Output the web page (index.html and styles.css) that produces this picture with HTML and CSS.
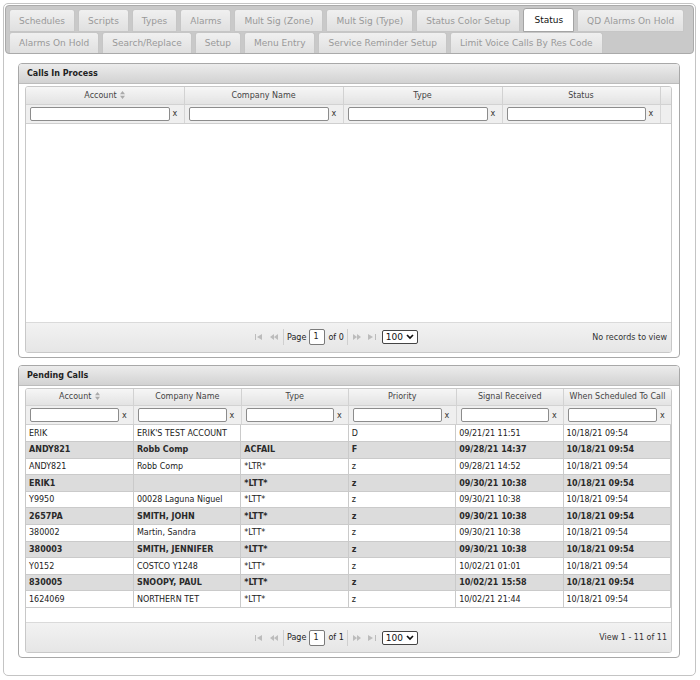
FILE: index.html
```html
<!DOCTYPE html>
<html lang="en">
<head>
    <meta charset="UTF-8">
    <title>Status</title>
    <link rel="stylesheet" href="styles.css">
</head>
<body>
    <div class="page">
        <div class="tabs">
            <ul class="tab-row">
                <li>Schedules</li>
                <li>Scripts</li>
                <li>Types</li>
                <li>Alarms</li>
                <li>Mult Sig (Zone)</li>
                <li>Mult Sig (Type)</li>
                <li>Status Color Setup</li>
                <li class="active">Status</li>
                <li>QD Alarms On Hold</li>
            </ul>
            <ul class="tab-row">
                <li>Alarms On Hold</li>
                <li>Search/Replace</li>
                <li>Setup</li>
                <li>Menu Entry</li>
                <li>Service Reminder Setup</li>
                <li>Limit Voice Calls By Res Code</li>
            </ul>
        </div>

        <section class="panel">
            <div class="panel-title">Calls In Process</div>
            <div class="panel-body">
                <div class="grid">
                    <table class="grid-head">
                        <colgroup>
                            <col style="width: 158px">
                            <col style="width: 159px">
                            <col style="width: 159px">
                            <col style="width: 158px">
                            <col>
                        </colgroup>
                        <tr class="labels">
                            <th>Account <svg class="sort" width="5" height="8" viewBox="0 0 5 8"><path d="M0 3.2L2.5 0 5 3.2zM0 4.8L2.5 8 5 4.8z"/></svg></th>
                            <th>Company Name</th>
                            <th>Type</th>
                            <th>Status</th>
                            <th class="scroll"></th>
                        </tr>
                        <tr class="filters">
                            <td><div class="filter"><input type="text"><span>x</span></div></td>
                            <td><div class="filter"><input type="text"><span>x</span></div></td>
                            <td><div class="filter"><input type="text"><span>x</span></div></td>
                            <td><div class="filter"><input type="text"><span>x</span></div></td>
                            <td class="scroll"></td>
                        </tr>
                    </table>
                    <div class="grid-body calls"></div>
                    <div class="pager">
                        <div></div>
                        <div class="pager-nav">
                            <svg class="pg-icon" width="8" height="6" viewBox="0 0 8 6"><path d="M0 0h1v6H0zM7 0v6L2 3z"/></svg>
                            <svg class="pg-icon" width="8" height="6" viewBox="0 0 8 6"><path d="M4 0v6L0 3zM8 0v6L4 3z"/></svg>
                            <span class="sep"></span>
                            <span>Page</span>
                            <span class="page-input">1</span>
                            <span>of 0</span>
                            <span class="sep"></span>
                            <svg class="pg-icon" width="8" height="6" viewBox="0 0 8 6"><path d="M0 0v6l4-3zM4 0v6l4-3z"/></svg>
                            <svg class="pg-icon" width="8" height="6" viewBox="0 0 8 6"><path d="M0 0v6l5-3zM7 0h1v6H7z"/></svg>
                            <span class="page-size">100 <svg width="8" height="6" viewBox="0 0 8 6"><path d="M1 1l3 3 3-3" fill="none" stroke="#111" stroke-width="1.7"/></svg></span>
                        </div>
                        <div class="pager-info">No records to view</div>
                    </div>
                </div>
            </div>
        </section>

        <section class="panel">
            <div class="panel-title">Pending Calls</div>
            <div class="panel-body">
                <div class="grid">
                    <table class="grid-head">
                        <tr class="labels">
                            <th>Account <svg class="sort" width="5" height="8" viewBox="0 0 5 8"><path d="M0 3.2L2.5 0 5 3.2zM0 4.8L2.5 8 5 4.8z"/></svg></th>
                            <th>Company Name</th>
                            <th>Type</th>
                            <th>Priority</th>
                            <th>Signal Received</th>
                            <th>When Scheduled To Call</th>
                        </tr>
                        <tr class="filters">
                            <td><div class="filter"><input type="text"><span>x</span></div></td>
                            <td><div class="filter"><input type="text"><span>x</span></div></td>
                            <td><div class="filter"><input type="text"><span>x</span></div></td>
                            <td><div class="filter"><input type="text"><span>x</span></div></td>
                            <td><div class="filter"><input type="text"><span>x</span></div></td>
                            <td><div class="filter"><input type="text"><span>x</span></div></td>
                        </tr>
                    </table>
                    <div class="grid-body pending">
                        <table class="rows">
                            <tr><td>ERIK</td><td>ERIK'S TEST ACCOUNT</td><td></td><td>D</td><td>09/21/21 11:51</td><td>10/18/21 09:54</td></tr>
                            <tr class="alt"><td>ANDY821</td><td>Robb Comp</td><td>ACFAIL</td><td>F</td><td>09/28/21 14:37</td><td>10/18/21 09:54</td></tr>
                            <tr><td>ANDY821</td><td>Robb Comp</td><td>*LTR*</td><td>z</td><td>09/28/21 14:52</td><td>10/18/21 09:54</td></tr>
                            <tr class="alt"><td>ERIK1</td><td></td><td>*LTT*</td><td>z</td><td>09/30/21 10:38</td><td>10/18/21 09:54</td></tr>
                            <tr><td>Y9950</td><td>00028 Laguna Niguel</td><td>*LTT*</td><td>z</td><td>09/30/21 10:38</td><td>10/18/21 09:54</td></tr>
                            <tr class="alt"><td>2657PA</td><td>SMITH, JOHN</td><td>*LTT*</td><td>z</td><td>09/30/21 10:38</td><td>10/18/21 09:54</td></tr>
                            <tr><td>380002</td><td>Martin, Sandra</td><td>*LTT*</td><td>z</td><td>09/30/21 10:38</td><td>10/18/21 09:54</td></tr>
                            <tr class="alt"><td>380003</td><td>SMITH, JENNIFER</td><td>*LTT*</td><td>z</td><td>09/30/21 10:38</td><td>10/18/21 09:54</td></tr>
                            <tr><td>Y0152</td><td>COSTCO Y1248</td><td>*LTT*</td><td>z</td><td>10/02/21 01:01</td><td>10/18/21 09:54</td></tr>
                            <tr class="alt"><td>830005</td><td>SNOOPY, PAUL</td><td>*LTT*</td><td>z</td><td>10/02/21 15:58</td><td>10/18/21 09:54</td></tr>
                            <tr><td>1624069</td><td>NORTHERN TET</td><td>*LTT*</td><td>z</td><td>10/02/21 21:44</td><td>10/18/21 09:54</td></tr>
                        </table>
                    </div>
                    <div class="pager">
                        <div></div>
                        <div class="pager-nav">
                            <svg class="pg-icon" width="8" height="6" viewBox="0 0 8 6"><path d="M0 0h1v6H0zM7 0v6L2 3z"/></svg>
                            <svg class="pg-icon" width="8" height="6" viewBox="0 0 8 6"><path d="M4 0v6L0 3zM8 0v6L4 3z"/></svg>
                            <span class="sep"></span>
                            <span>Page</span>
                            <span class="page-input">1</span>
                            <span>of 1</span>
                            <span class="sep"></span>
                            <svg class="pg-icon" width="8" height="6" viewBox="0 0 8 6"><path d="M0 0v6l4-3zM4 0v6l4-3z"/></svg>
                            <svg class="pg-icon" width="8" height="6" viewBox="0 0 8 6"><path d="M0 0v6l5-3zM7 0h1v6H7z"/></svg>
                            <span class="page-size">100 <svg width="8" height="6" viewBox="0 0 8 6"><path d="M1 1l3 3 3-3" fill="none" stroke="#111" stroke-width="1.7"/></svg></span>
                        </div>
                        <div class="pager-info">View 1 - 11 of 11</div>
                    </div>
                </div>
            </div>
        </section>
    </div>
</body>
</html>
```

FILE: styles.css
```css
* {
    box-sizing: border-box;
    margin: 0;
    padding: 0;
}

body {
    font-family: 'DejaVu Sans', Verdana, sans-serif;
    font-size: 8px;
    color: #222;
    background: #fff;
}

.page {
    margin: 3px 4px 4px 3px;
    padding: 1px 1px 17px 1px;
    border: 1px solid #c4c4c4;
    border-radius: 5px;
}

/* Tabs */
.tabs {
    background: #c9c9c9;
    border: 1px solid #aaa;
    border-radius: 4px;
    padding: 3px 3px 0 3px;
}

.tab-row {
    list-style: none;
    display: flex;
    gap: 3px;
}

.tab-row li {
    height: 23px;
    line-height: 22px;
    padding: 0 9px;
    font-size: 9px;
    color: #999;
    background: linear-gradient(#f0f0f0, #e0e0e0);
    border: 1px solid #c6c6c6;
    border-radius: 3px 3px 0 0;
    white-space: nowrap;
}

.tab-row + .tab-row li {
    height: 21px;
    line-height: 20px;
    border-bottom: none;
}

.tab-row li.active {
    background: #fff;
    color: #111;
    border-color: #a4a4a4;
    height: 24px;
    margin-top: -1px;
    line-height: 23px;
    padding: 0 10px;
}

/* Panels */
.panel {
    margin: 9px 14px 0 13px;
    border: 1px solid #a8a8a8;
    border-radius: 4px;
    background: #fff;
}

.panel + .panel {
    margin-top: 7px;
}

.panel-title {
    height: 20px;
    line-height: 19px;
    padding-left: 8px;
    font-weight: bold;
    font-size: 8px;
    color: #222;
    background: linear-gradient(#ececec, #d2d2d2);
    border-bottom: 1px solid #bcbcbc;
    border-radius: 3px 3px 0 0;
}

.panel-body {
    padding: 2px 7px 4px 6px;
}

/* Grid */
.grid {
    border: 1px solid #c8c8c8;
    border-radius: 3px;
    overflow: hidden;
}

.grid table {
    width: 100%;
    table-layout: fixed;
    border-collapse: collapse;
}

.labels th {
    height: 17px;
    font-weight: normal;
    color: #444;
    background: linear-gradient(#f6f6f6, #e3e3e3);
    border-right: 1px solid #d2d2d2;
    border-bottom: 1px solid #d2d2d2;
    text-align: center;
}

.sort {
    fill: #aaa;
    vertical-align: -1px;
    margin-left: 1px;
}

.filters td {
    height: 19px;
    background: #efefef;
    border-right: 1px solid #d6d6d6;
    border-bottom: 1px solid #cfcfcf;
    padding: 0 4px 0 4px;
}

.labels th:last-child,
.filters td:last-child {
    border-right: none;
}

.filter {
    display: flex;
    align-items: center;
}

.filter input {
    flex: 1;
    min-width: 0;
    height: 14px;
    border: 1px solid #8c8c8c;
    border-radius: 2px;
    background: #fff;
}

.filter span {
    width: 10px;
    padding-left: 3px;
    color: #333;
}

.grid-body {
    background: #fff;
}

.grid-body.calls {
    height: 198px;
}

.grid-body.pending {
    height: 197px;
}

.rows td {
    height: 16.6px;
    padding: 0 3px;
    border-right: 1px solid #cacaca;
    border-bottom: 1px solid #cacaca;
    white-space: nowrap;
    overflow: hidden;
}

.rows tr.alt td {
    background: #dcdcdc;
    font-weight: bold;
    color: #2a2a2a;
}

/* Pager */
.pager {
    height: 30px;
    display: grid;
    grid-template-columns: 227px auto 1fr;
    align-items: center;
    background: linear-gradient(#f2f2f2, #e6e6e6);
    border-top: 1px solid #dadada;
    color: #222;
}

.pager-nav {
    display: flex;
    align-items: center;
    gap: 3px;
}

.pg-icon {
    fill: #bcbcbc;
    margin: 0 2px;
}

.sep {
    width: 1px;
    height: 16px;
    background: #cfcfcf;
}

.page-input {
    width: 16px;
    height: 16px;
    line-height: 14px;
    padding-left: 3px;
    background: #fff;
    border: 1px solid #7a7a7a;
    border-radius: 2px;
}

.page-size {
    display: flex;
    align-items: center;
    gap: 3px;
    height: 14px;
    margin-left: 1px;
    padding: 0 3px;
    font-size: 9px;
    color: #111;
    background: #fff;
    border: 1px solid #444;
    border-radius: 2px;
}

.pager-info {
    text-align: right;
    padding-right: 4px;
    color: #333;
}
```
